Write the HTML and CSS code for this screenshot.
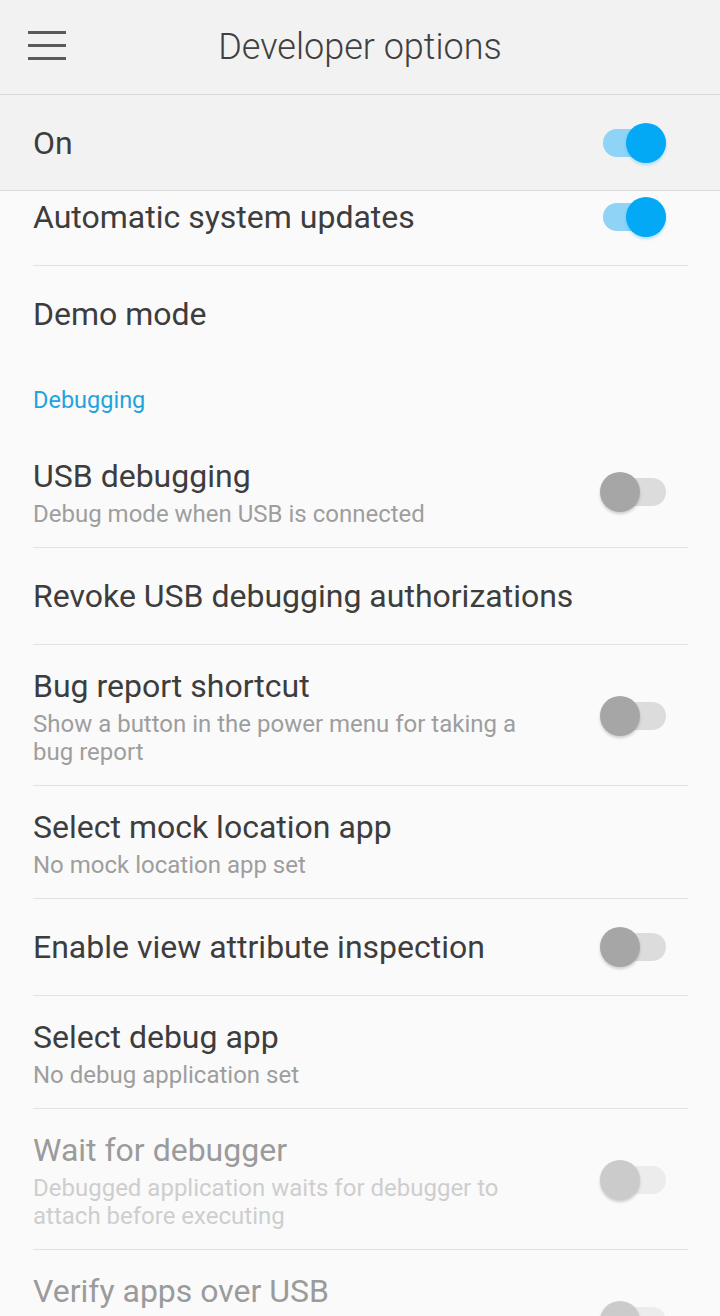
FILE: index.html
```html
<!DOCTYPE html>
<html lang="en">
<head>
    <meta charset="UTF-8">
    <meta name="viewport" content="width=device-width, initial-scale=1.0">
    <title>Developer options</title>
    <link rel="stylesheet" href="styles.css">
</head>
<body>
    <header class="toolbar">
        <span class="menu-icon">
            <svg width="38" height="30" viewBox="0 0 38 30">
                <rect x="0" y="0" width="38" height="3" fill="#5a5a5a"/>
                <rect x="0" y="13" width="38" height="3" fill="#5a5a5a"/>
                <rect x="0" y="26" width="38" height="3" fill="#5a5a5a"/>
            </svg>
        </span>
        <h1>Developer options</h1>
    </header>

    <div class="master-switch">
        <span class="master-label">On</span>
        <span class="switch on"></span>
    </div>

    <div class="scroll">
        <div class="list">
            <div class="row">
                <div class="text"><div class="title">Automatic system updates</div></div>
                <span class="switch on"></span>
            </div>
            <div class="row last">
                <div class="text"><div class="title">Demo mode</div></div>
            </div>

            <div class="category">Debugging</div>

            <div class="row">
                <div class="text">
                    <div class="title">USB debugging</div>
                    <div class="summary">Debug mode when USB is connected</div>
                </div>
                <span class="switch"></span>
            </div>
            <div class="row">
                <div class="text"><div class="title">Revoke USB debugging authorizations</div></div>
            </div>
            <div class="row">
                <div class="text">
                    <div class="title">Bug report shortcut</div>
                    <div class="summary">Show a button in the power menu for taking a bug report</div>
                </div>
                <span class="switch"></span>
            </div>
            <div class="row">
                <div class="text">
                    <div class="title">Select mock location app</div>
                    <div class="summary">No mock location app set</div>
                </div>
            </div>
            <div class="row">
                <div class="text"><div class="title">Enable view attribute inspection</div></div>
                <span class="switch"></span>
            </div>
            <div class="row">
                <div class="text">
                    <div class="title">Select debug app</div>
                    <div class="summary">No debug application set</div>
                </div>
            </div>
            <div class="row disabled">
                <div class="text">
                    <div class="title">Wait for debugger</div>
                    <div class="summary">Debugged application waits for debugger to attach before executing</div>
                </div>
                <span class="switch"></span>
            </div>
            <div class="row disabled">
                <div class="text">
                    <div class="title">Verify apps over USB</div>
                    <div class="summary">Check apps installed via ADB/ADT for harmful behavior</div>
                </div>
                <span class="switch"></span>
            </div>
        </div>
    </div>
</body>
</html>
```

FILE: styles.css
```css
/* Settings screen */
body {
    margin: 0;
    height: 1316px;
    overflow: hidden;
    font-family: Roboto, "Noto Sans", sans-serif;
    background: #fafafa;
    color: #3d3d3d;
    display: flex;
    flex-direction: column;
}

.toolbar {
    height: 94px;
    background: #f2f2f2;
    border-bottom: 1px solid #d9d9d9;
    display: flex;
    align-items: center;
    flex-shrink: 0;
}

.menu-icon {
    display: flex;
    margin-left: 28px;
    margin-top: -2px;
}

.toolbar h1 {
    flex: 1;
    margin: 0 0 0 -66px;
    text-align: center;
    font-size: 36px;
    font-weight: 300;
    color: #404040;
}

.master-switch {
    height: 95px;
    background: #f2f2f2;
    border-bottom: 1px solid #d9d9d9;
    display: flex;
    align-items: center;
    justify-content: space-between;
    padding: 0 54px 0 33px;
    flex-shrink: 0;
}

.master-label {
    font-size: 32px;
}

.scroll {
    flex: 1;
    overflow: hidden;
}

.list {
    margin-top: -22px;
    padding: 0 32px 0 33px;
}

.row {
    display: flex;
    align-items: center;
    justify-content: space-between;
    min-height: 40px;
    padding: 28px 22px 28px 0;
    border-bottom: 1px solid #e3e3e3;
}

.row.last {
    border-bottom: none;
}

.row:has(.summary) {
    padding-top: 21px;
    padding-bottom: 19px;
}

.text {
    flex: 1;
    min-width: 0;
}

.title {
    font-size: 32px;
    line-height: 40px;
    white-space: nowrap;
}

.summary {
    max-width: 520px;
    margin-top: 4px;
    font-size: 24px;
    line-height: 28px;
    color: #9e9e9e;
}

.disabled .title {
    color: #9b9b9b;
}

.disabled .summary {
    color: #cecece;
}

.category {
    height: 73px;
    line-height: 76px;
    font-size: 23.5px;
    color: #23a3de;
}

/* Switch */
.switch {
    position: relative;
    width: 63px;
    height: 28px;
    border-radius: 14px;
    background: #dcdcdc;
    flex-shrink: 0;
}

.switch::after {
    content: "";
    position: absolute;
    left: -3px;
    top: -6px;
    width: 40px;
    height: 40px;
    border-radius: 50%;
    background: #a6a6a6;
    box-shadow: 0 2px 3px rgba(0, 0, 0, 0.18);
}

.switch.on {
    background: #8fd3f6;
}

.switch.on::after {
    left: auto;
    right: 0;
    background: #03a9f4;
    box-shadow: 0 2px 3px rgba(3, 169, 244, 0.3);
}

.disabled .switch {
    background: #ececec;
}

.disabled .switch::after {
    background: #cbcbcb;
}
```
